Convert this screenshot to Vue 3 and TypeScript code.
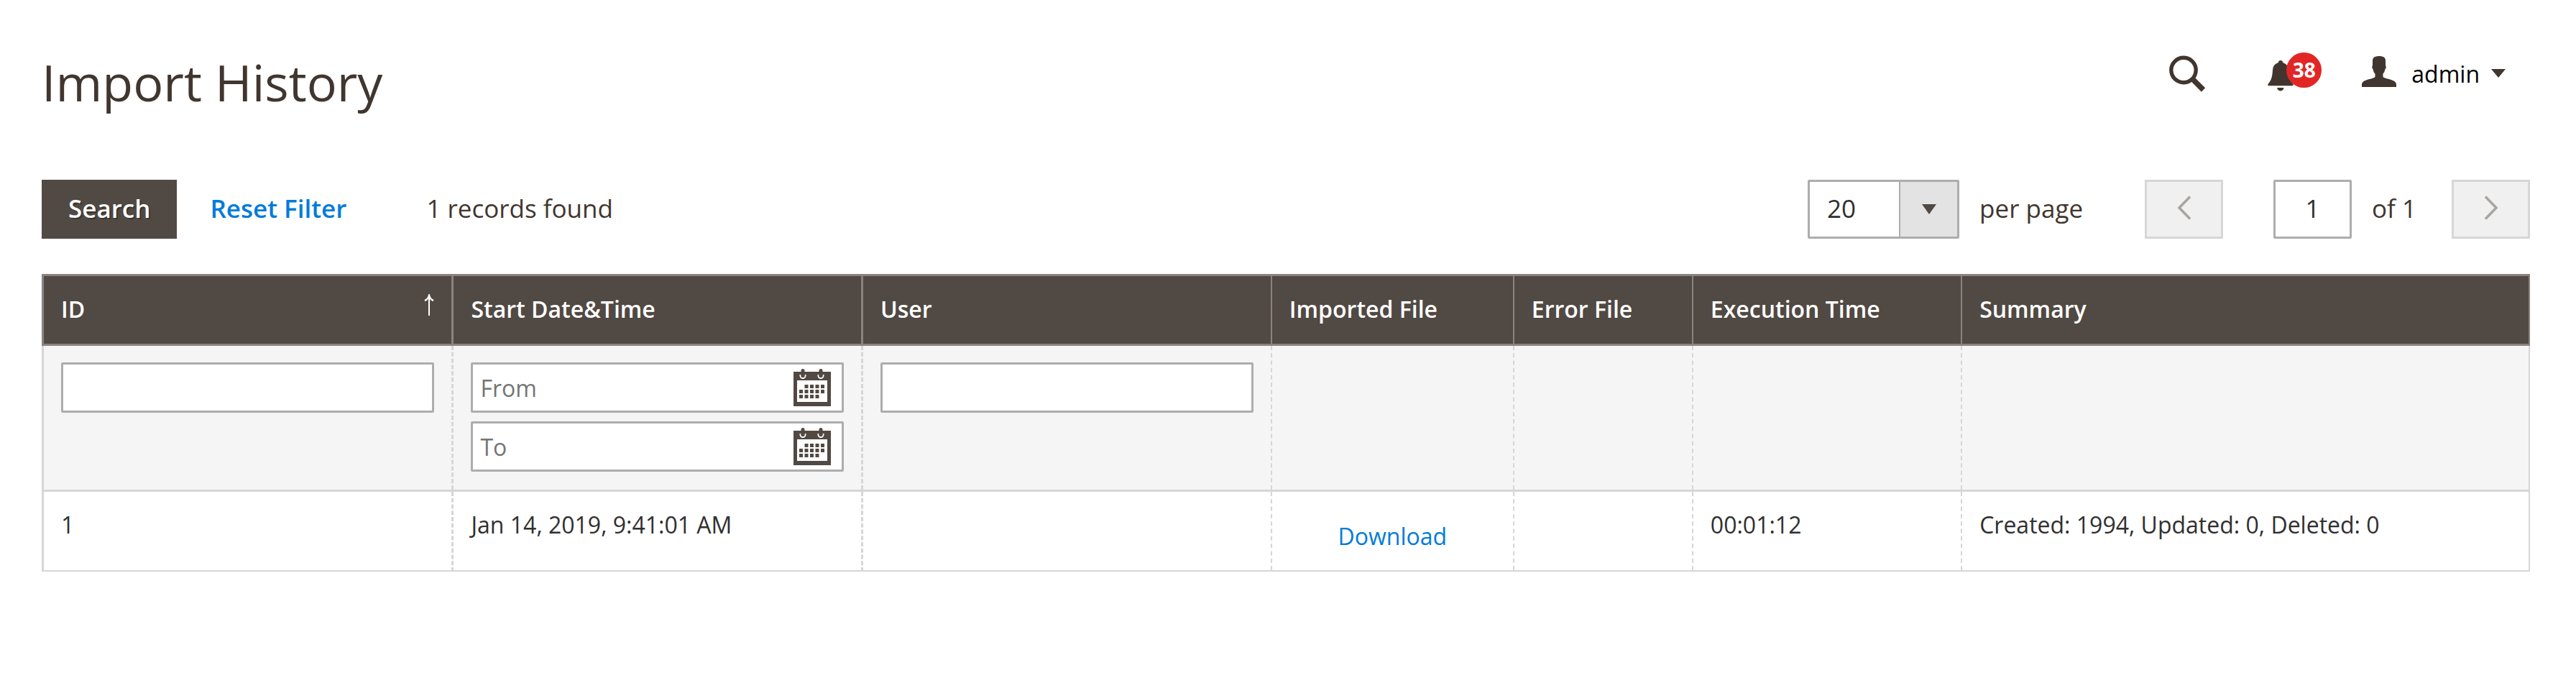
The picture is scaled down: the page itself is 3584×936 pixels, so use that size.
<script setup lang="ts">
import { ref } from 'vue'

interface Column {
  key: string
  label: string
  sorted?: boolean
}

interface ImportRecord {
  id: number
  started: string
  user: string
  importedFile: string
  errorFile: string
  executionTime: string
  summary: string
}

const columns: Column[] = [
  { key: 'id', label: 'ID', sorted: true },
  { key: 'started', label: 'Start Date&Time' },
  { key: 'user', label: 'User' },
  { key: 'imported', label: 'Imported File' },
  { key: 'error', label: 'Error File' },
  { key: 'time', label: 'Execution Time' },
  { key: 'summary', label: 'Summary' },
]

const records: ImportRecord[] = [
  {
    id: 1,
    started: 'Jan 14, 2019, 9:41:01 AM',
    user: '',
    importedFile: 'Download',
    errorFile: '',
    executionTime: '00:01:12',
    summary: 'Created: 1994, Updated: 0, Deleted: 0',
  },
]

const dateFields = ['From', 'To']

// Day squares of the calendar icon, one [column, row] pair each
const days: [number, number][] = [
  [1, 0], [2, 0], [3, 0], [4, 0],
  [0, 1], [1, 1], [2, 1], [3, 1], [4, 1],
  [0, 2], [1, 2], [2, 2], [3, 2],
]

const perPage = ref('20')
const page = ref('1')
const filterId = ref('')
const filterUser = ref('')
const dates = ref<Record<string, string>>({ From: '', To: '' })

function resetFilter() {
  filterId.value = ''
  filterUser.value = ''
  dates.value = { From: '', To: '' }
}
</script>

<template>
  <main class="page">
    <header class="page-header">
      <h1 class="title">Import History</h1>
      <div class="tools">
        <button type="button" class="tool" aria-label="Search">
          <svg width="52" height="60" viewBox="0 0 52 60" fill="none" stroke="#41362f">
            <circle cx="21" cy="25.500" r="17.200" stroke-width="5.400" />
            <path d="M33 37.500 48.500 53" stroke-width="7.500" />
          </svg>
        </button>
        <button type="button" class="tool bell" aria-label="Notifications">
          <svg width="36" height="60" viewBox="0 0 36 60" fill="#41362f">
            <path d="M18 12c2 0 3.200 1.300 3.400 3.200 5 1.400 7.200 5 7.600 10.300.7 9.500 1.500 13.500 6.500 19.500.6 1 .3 2.200-1 2.200h-33c-1.300 0-1.600-1.200-1-2.200 5-6 5.800-10 6.500-19.500.4-5.300 2.600-8.900 7.600-10.300C14.800 13.300 16 12 18 12z" />
            <path d="M13.200 50h9.200c0 2.600-2 4.400-4.600 4.400s-4.600-1.800-4.600-4.400z" />
          </svg>
          <span class="badge">38</span>
        </button>
        <button type="button" class="tool account">
          <svg width="48" height="60" viewBox="0 0 48 60" fill="#41362f">
            <path d="M24 6c5.600 0 9 2 9 6v7c1.200 1.500.8 4-.7 5.500-.4 3-1.300 4.500-2.800 6V35c1.500 1.600 5 2.200 9 3.200 6.500 1.700 9.500 4 9.500 7.500V49H0v-3.300c0-3.500 3-5.800 9.500-7.500 4-1 7.500-1.600 9-3.200v-4.500c-1.500-1.500-2.400-3-2.800-6-1.500-1.500-1.900-4-.7-5.500v-7C15 8 18.400 6 24 6z" />
          </svg>
          <span class="name">admin</span>
          <svg width="20" height="12" viewBox="0 0 20 12" fill="#41362f"><path d="M0 0h20L10 12z" /></svg>
        </button>
      </div>
    </header>

    <div class="toolbar">
      <button type="button" class="search">Search</button>
      <button type="button" class="reset" @click="resetFilter">Reset Filter</button>
      <span class="count">{{ records.length }} records found</span>
      <div class="pager">
        <div class="select">
          <select id="per-page" v-model="perPage">
            <option>20</option>
            <option>30</option>
            <option>50</option>
            <option>100</option>
            <option>200</option>
          </select>
          <span class="select-arrow">
            <svg width="20" height="14" viewBox="0 0 20 14" fill="#514943"><path d="M0 0h20L10 14z" /></svg>
          </span>
        </div>
        <label class="per-page" for="per-page">per page</label>
        <button type="button" class="step" aria-label="Previous page" disabled>
          <svg width="20" height="34" viewBox="0 0 20 34" fill="none" stroke="#a8a4a1" stroke-width="3.500"><path d="M18 1.500 3 17l15 15.500" /></svg>
        </button>
        <input id="page" v-model="page" class="page-input" type="text" />
        <label class="of" for="page">of 1</label>
        <button type="button" class="step" aria-label="Next page" disabled>
          <svg width="20" height="34" viewBox="0 0 20 34" fill="none" stroke="#a8a4a1" stroke-width="3.500"><path d="M2 1.500 17 17 2 32.500" /></svg>
        </button>
      </div>
    </div>

    <table class="grid">
      <colgroup>
        <col v-for="c in columns" :key="c.key" :class="'col-' + c.key" />
      </colgroup>
      <thead>
        <tr>
          <th v-for="c in columns" :key="c.key" scope="col">
            <span class="head">
              {{ c.label }}
              <svg v-if="c.sorted" class="sort" width="14" height="30" viewBox="0 0 14 30" fill="none" stroke="#fff">
                <path d="M7 2v28" stroke-width="2" />
                <path d="M1 9c3-1 5-3.500 6-7 1 3.500 3 6 6 7" stroke-width="2.500" />
              </svg>
            </span>
          </th>
        </tr>
      </thead>
      <tbody>
        <tr class="filters">
          <td><input v-model="filterId" class="field" type="text" aria-label="ID" /></td>
          <td>
            <div class="range">
              <div v-for="d in dateFields" :key="d" class="date">
                <input v-model="dates[d]" class="field" type="text" :placeholder="d" :aria-label="d" />
                <button type="button" class="calendar" :aria-label="d + ' date'">
                  <svg width="52" height="52" viewBox="0 0 52 52">
                    <path d="M0 4h52v48H0z" fill="#514943" />
                    <path d="M5 16h42v30H5z" fill="#fff" />
                    <path d="M9.500 8v1.500a3.500 3.500 0 0 0 7 0V8M34.500 8v1.500a3.500 3.500 0 0 0 7 0V8" fill="none" stroke="#fff" stroke-width="2" />
                    <path d="M13 2.500v7M38 2.500v7" stroke="#514943" stroke-width="5" stroke-linecap="round" />
                    <rect v-for="([x, y], i) in days" :key="i" :x="8 + x * 7.500" :y="22 + y * 7" width="5" height="5" fill="#514943" />
                  </svg>
                </button>
              </div>
            </div>
          </td>
          <td><input v-model="filterUser" class="field" type="text" aria-label="User" /></td>
          <td></td>
          <td></td>
          <td></td>
          <td></td>
        </tr>
        <tr v-for="r in records" :key="r.id" class="record">
          <td>{{ r.id }}</td>
          <td>{{ r.started }}</td>
          <td>{{ r.user }}</td>
          <td class="file"><a href="#">{{ r.importedFile }}</a></td>
          <td>{{ r.errorFile }}</td>
          <td>{{ r.executionTime }}</td>
          <td>{{ r.summary }}</td>
        </tr>
      </tbody>
    </table>
  </main>
</template>

<style>
body {
  margin: 0;
  background: #fff;
}
</style>

<style scoped>
.page {
  box-sizing: border-box;
  padding: 67px 64px 64px 58px;
  color: #41362f;
  font-family: "Open Sans", "Noto Sans", sans-serif;
  font-size: 32px;
  line-height: 45px;
}
.page *,
.page *::before {
  box-sizing: border-box;
}
button,
input,
select {
  margin: 0;
  padding: 0;
  border: 0;
  border-radius: 0;
  background: none;
  color: inherit;
  font: inherit;
}
button {
  cursor: pointer;
}
svg {
  display: block;
  flex: none;
}
.page-header {
  display: flex;
  justify-content: space-between;
  align-items: flex-start;
  margin-bottom: 88px;
}
.title {
  margin: 0;
  font-size: 70px;
  font-weight: 400;
  line-height: 95px;
}
.tools {
  display: flex;
  align-items: center;
  padding: 5px 34px 0 0;
}
.tool {
  display: flex;
  align-items: center;
}
.bell {
  position: relative;
  margin: 0 95px 0 86px;
}
.badge {
  position: absolute;
  top: 1px;
  left: 26px;
  width: 49px;
  height: 49px;
  border-radius: 50%;
  background: #e22626;
  color: #fff;
  font-size: 28px;
  font-weight: 700;
  line-height: 49px;
  text-align: center;
}
.name {
  margin: 0 16px 0 21px;
  color: #000;
}
.toolbar {
  display: flex;
  align-items: center;
  height: 82px;
  margin-bottom: 49px;
  font-size: 35px;
  white-space: nowrap;
}
.search,
.reset,
.count,
.per-page,
.of {
  padding-bottom: 3px;
}
.search {
  height: 82px;
  padding-right: 37px;
  padding-left: 37px;
  background: #514943;
  color: #fff;
  font-weight: 600;
  text-shadow: 2px 2px 0 rgba(0, 0, 0, 0.3);
}
.reset {
  margin: 0 111px 0 46px;
  color: #007bdb;
  font-weight: 600;
}
.pager {
  display: flex;
  align-items: center;
  margin-left: auto;
}
.select {
  position: relative;
  width: 211px;
  height: 82px;
}
.select select {
  width: 100%;
  height: 100%;
  padding: 0 84px 3px 24px;
  border: 3px solid #adadad;
  border-radius: 2px;
  background: #fff;
  color: #303030;
  appearance: none;
}
.select-arrow {
  position: absolute;
  top: 3px;
  right: 3px;
  bottom: 3px;
  display: flex;
  align-items: center;
  justify-content: center;
  width: 81px;
  border-left: 2px solid #adadad;
  background: #e3e3e3;
  pointer-events: none;
}
.per-page {
  margin: 0 86px 0 28px;
}
.step {
  display: flex;
  align-items: center;
  justify-content: center;
  width: 109px;
  height: 82px;
  padding-bottom: 4px;
  border: 3px solid #d6d6d6;
  background: #f0f0f0;
  cursor: default;
}
.page-input {
  width: 109px;
  height: 82px;
  margin-left: 70px;
  padding-bottom: 3px;
  border: 3px solid #adadad;
  border-radius: 2px;
  color: #303030;
  text-align: center;
}
.of {
  margin: 0 49px 0 28px;
}
.grid {
  width: 100%;
  border-collapse: collapse;
  table-layout: fixed;
}
.col-id {
  width: 16.49%;
}
.col-started,
.col-user {
  width: 16.46%;
}
.col-imported {
  width: 9.74%;
}
.col-error {
  width: 7.2%;
}
.col-time {
  width: 10.82%;
}
th {
  padding: 23px 24px 26px;
  border: 3px solid #8a837f;
  background: #514943;
  color: #fff;
  font-weight: 600;
  text-align: left;
}
.head {
  display: flex;
  justify-content: space-between;
}
.sort {
  margin-top: 2px;
}
td {
  padding: 23px 24px 41px;
  border: 3px solid #d6d6d6;
  border-right-style: dashed;
  border-left-style: dashed;
  color: #303030;
  vertical-align: top;
}
td:first-child {
  border-left-style: solid;
}
td:last-child {
  border-right-style: solid;
}
th:nth-child(n + 4),
td:nth-child(n + 4) {
  border-right-width: 2px;
  border-left-width: 2px;
}
th:nth-child(3),
td:nth-child(3) {
  border-right-width: 2px;
}
.filters td {
  padding: 23px 24px 25px;
  background: #f5f5f5;
}
.record td {
  border-bottom-width: 2px;
}
.field {
  display: block;
  width: 100%;
  height: 70px;
  padding: 0 72px 0 10px;
  border: 3px solid #adadad;
  border-radius: 2px;
  background: #fff;
}
.field::placeholder {
  color: #757575;
  opacity: 1;
}
.range {
  display: grid;
  gap: 12px;
}
.date {
  position: relative;
}
.calendar {
  position: absolute;
  top: 9px;
  right: 18px;
}
.record .file {
  padding-top: 39px;
  padding-bottom: 25px;
  text-align: center;
}
a {
  color: #007bdb;
  text-decoration: none;
}
</style>
